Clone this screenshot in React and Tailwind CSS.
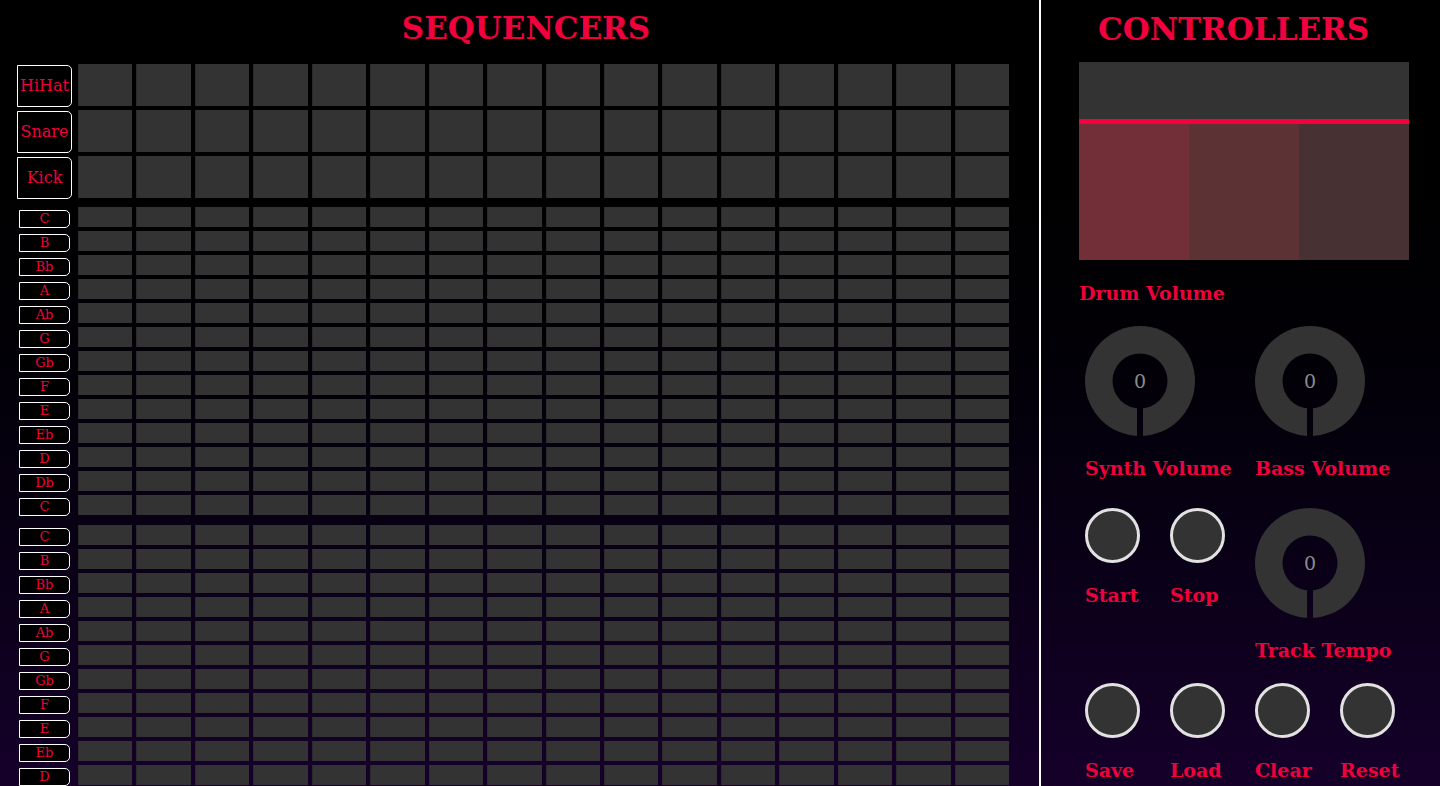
import React from "react";

const RED = "text-[#f0003c]";
const NOTES = ["C", "B", "Bb", "A", "Ab", "G", "Gb", "F", "E", "Eb", "D", "Db", "C"];
const DRUMS = ["HiHat", "Snare", "Kick"];
const STEPS = Array.from({ length: 16 }, (_, i) => i);

const Cells = () => (
  <div className="flex w-[935px] h-full py-[2px]">
    {STEPS.map((i) => (
      <div key={i} className="flex-1 mx-[2px] bg-[#333333] border-l border-[#2b2b2b]" />
    ))}
  </div>
);

const DrumRow = ({ name }) => (
  <div className="flex items-center h-[46px]">
    <div className="w-[63px] flex justify-center">
      <div className={`w-[55px] h-[42px] mt-[2px] bg-black border border-white rounded-r-[5px] flex items-center justify-center text-[16px] ${RED}`}>
        {name}
      </div>
    </div>
    <Cells />
  </div>
);

const NoteRow = ({ name }) => (
  <div className="flex items-center h-[24px]">
    <div className="w-[63px] flex justify-center">
      <div className={`w-[51px] h-[18px] mt-[3px] bg-black border border-white rounded-r-[5px] flex items-center justify-center text-[13px] leading-none ${RED}`}>
        {name}
      </div>
    </div>
    <Cells />
  </div>
);

const Knob = ({ id }) => (
  <div className="relative w-[110px] h-[110px]">
    <svg width="110" height="110" viewBox="0 0 110 110">
      <defs>
        <mask id={id}>
          <rect x="0" y="0" width="110" height="110" fill="white" />
          <circle cx="55" cy="55" r="27.5" fill="black" />
          <rect x="52" y="55" width="6" height="56" fill="black" />
        </mask>
      </defs>
      <circle cx="55" cy="55" r="55" fill="#333333" mask={`url(#${id})`} />
    </svg>
    <div className="absolute inset-0 flex items-center justify-center text-[19px] text-[#8c8c8c]">0</div>
  </div>
);

const Label = ({ children }) => (
  <div className={`mt-[20px] h-[24px] leading-[24px] text-[19px] font-bold whitespace-nowrap ${RED}`}>{children}</div>
);

const Button = ({ label }) => (
  <div className="w-[85px]">
    <div className="w-[55px] h-[55px] rounded-full bg-[#333333] border-[3px] border-[#e2e2e2]" />
    <Label>{label}</Label>
  </div>
);

export default function App() {
  return (
    <div
      className="flex h-screen overflow-hidden bg-gradient-to-b from-black to-[#16002a]"
      style={{ fontFamily: '"DejaVu Serif", Georgia, serif' }}
    >
      {/* sequencers */}
      <div className="w-[1039px] shrink-0 pl-[13px]">
        <div className="h-[62px] pt-[9px]">
          <h1 className={`text-center text-[31px] leading-[38px] font-bold ${RED}`}>SEQUENCERS</h1>
        </div>
        <div>
          {DRUMS.map((d) => (
            <DrumRow key={d} name={d} />
          ))}
        </div>
        <div className="mt-[5px]">
          {NOTES.map((n, i) => (
            <NoteRow key={"a" + i} name={n} />
          ))}
        </div>
        <div className="mt-[6px]">
          {NOTES.map((n, i) => (
            <NoteRow key={"b" + i} name={n} />
          ))}
        </div>
      </div>

      <div className="w-[2px] shrink-0 bg-white" />

      {/* controllers */}
      <div className="flex-1">
        <div className="h-[62px] pt-[10px] pl-[57px]">
          <h1 className={`text-[31px] leading-[38px] font-bold ${RED}`}>CONTROLLERS</h1>
        </div>

        <div className="ml-[38px] w-[330px] h-[198px] bg-[#333333] flex flex-col">
          <div className="h-[57px]" />
          <div className="h-[5px] bg-[#f5003d]" />
          <div className="flex flex-1">
            <div className="flex-1 bg-[#722f37]" />
            <div className="flex-1 bg-[#5c3234]" />
            <div className="flex-1 bg-[#473133]" />
          </div>
        </div>

        <div className={`ml-[38px] mt-[21px] h-[24px] leading-[24px] text-[19px] font-bold ${RED}`}>Drum Volume</div>

        <div className="ml-[44px] mt-[21px] flex">
          <div className="w-[170px]">
            <Knob id="synth" />
            <Label>Synth Volume</Label>
          </div>
          <div className="w-[170px]">
            <Knob id="bass" />
            <Label>Bass Volume</Label>
          </div>
        </div>

        <div className="ml-[44px] mt-[28px] flex">
          <Button label="Start" />
          <Button label="Stop" />
          <div className="w-[170px]">
            <Knob id="tempo" />
            <Label>Track Tempo</Label>
          </div>
        </div>

        <div className="ml-[44px] mt-[21px] flex">
          <Button label="Save" />
          <Button label="Load" />
          <Button label="Clear" />
          <Button label="Reset" />
        </div>
      </div>
    </div>
  );
}
